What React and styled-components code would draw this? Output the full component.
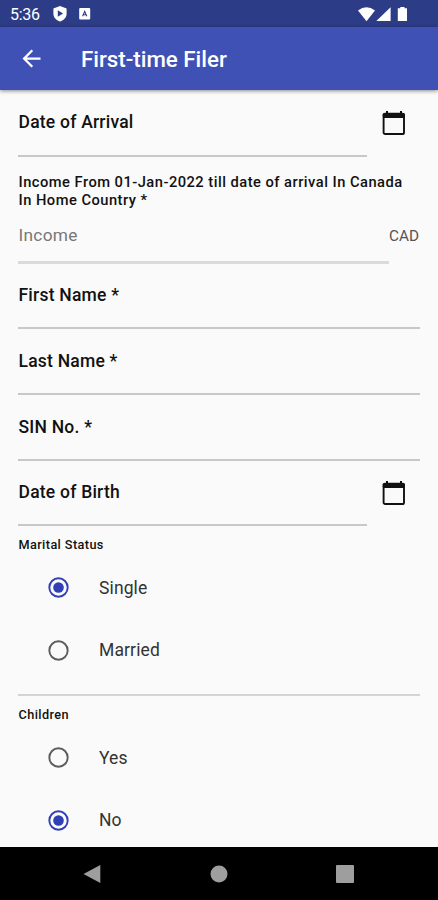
import React, { useState } from 'react';
import styled, { createGlobalStyle } from 'styled-components';

const GlobalStyle = createGlobalStyle`
  * {
    box-sizing: border-box;
  }
  body {
    margin: 0;
    font-family: Roboto, "Liberation Sans", sans-serif;
    background-color: #fafafa;
  }
`;

const Screen = styled.div`
  display: flex;
  flex-direction: column;
  height: 900px;
  overflow: hidden;
`;

const StatusBar = styled.div`
  display: flex;
  flex: none;
  align-items: center;
  height: 27px;
  padding: 1px 29px 0 10px;
  color: white;
  background-color: #2d3c87;
`;
const Clock = styled.span`
  width: 43px;
  font-size: 16px;
  letter-spacing: -0.3px;
`;
const StatusIcons = styled.div`
  display: flex;
  align-items: center;
  margin-left: ${props => (props.$end ? 'auto' : '0')};
`;

const AppBar = styled.header`
  display: flex;
  flex: none;
  align-items: center;
  height: 63px;
  padding: 0 18px;
  color: white;
  background-color: #3f51b5;
  box-shadow: 0 1px 4px rgba(0, 0, 0, 0.45);
  z-index: 1;
`;
const BackButton = styled.button`
  display: flex;
  width: 63px;
  border: 0;
  padding: 0;
  color: white;
  background: none;
  cursor: pointer;
`;
const Title = styled.h1`
  margin: 0;
  font-size: 22.3px;
  font-weight: 500;
`;

const Form = styled.form`
  flex: 1;
  min-height: 0;
  padding: 0 18px;
  overflow: hidden;
`;
const FieldRow = styled.div`
  display: flex;
  height: ${props => props.$height};
`;
const Field = styled.div`
  display: flex;
  flex: 1;
  align-items: center;
  border-bottom: ${props => props.$line || '2px solid #c8c8c8'};
  padding-bottom: ${props => props.$lift || '2px'};
  padding-left: 0.5px;
  color: ${props => (props.$hint ? '#777' : '#111')};
  font-size: ${props => (props.$hint ? '17.3px' : '17.5px')};
  font-weight: ${props => (props.$hint ? 400 : 500)};
  letter-spacing: ${props => (props.$hint ? '0.3px' : '0.22px')};
`;
const IconSlot = styled.div`
  display: flex;
  flex: none;
  align-items: center;
  justify-content: center;
  width: 53px;
  padding-bottom: 2px;
`;
const Suffix = styled.div`
  display: flex;
  flex: none;
  align-items: center;
  width: 31px;
  padding-bottom: 1px;
  color: #555;
  font-size: 15.3px;
`;
const IncomeLabel = styled.div`
  padding-top: 17px;
  padding-left: 0.5px;
  height: 52px;
  color: #111;
  font-size: 14.7px;
  font-weight: 500;
  line-height: 17.7px;
  letter-spacing: 0.48px;
  white-space: nowrap;
`;

const Group = styled.div`
  height: ${props => props.$height};
  border-bottom: 2px solid #d4d4d4;
`;
const GroupLabel = styled.div`
  height: 30.6px;
  padding-top: 11px;
  padding-left: 0.5px;
  color: #111;
  font-size: 12.7px;
  font-weight: 500;
  line-height: 15px;
  letter-spacing: 0.4px;
`;
const Option = styled.div`
  display: flex;
  align-items: center;
  height: 62.4px;
  padding-left: 30px;
  color: #333;
  font-size: 17.5px;
  letter-spacing: 0.12px;
  cursor: pointer;
`;
const OptionText = styled.span`
  margin-left: 30px;
`;

const NavBar = styled.nav`
  display: flex;
  flex: none;
  align-items: center;
  justify-content: space-between;
  height: 53px;
  padding: 0 84px 0 83px;
  background-color: #000;
`;

function CalendarIcon() {
  return (
    <svg width="24" height="26" viewBox="0 0 24 26">
      <path d="M5 1v4M19 1v4" stroke="#111" strokeWidth="2" />
      <rect x="1.6" y="3.6" width="20.4" height="20.4" rx="1.6" fill="none" stroke="#111" strokeWidth="1.9" />
      <rect x="0.8" y="3.2" width="22" height="4.8" rx="1" fill="#111" />
    </svg>
  );
}

function RadioIcon({ checked }) {
  const color = checked ? '#303fb5' : '#5c5c5c';
  return (
    <svg width="21" height="21" viewBox="0 0 21 21">
      <circle cx="10.5" cy="10.5" r="9.2" fill="none" stroke={color} strokeWidth="1.9" />
      {checked && <circle cx="10.5" cy="10.5" r="5.3" fill={color} />}
    </svg>
  );
}

function TextField({ label, height, lift }) {
  return (
    <FieldRow $height={height}>
      <Field $lift={lift}>{label}</Field>
    </FieldRow>
  );
}

function DateField({ label, height }) {
  return (
    <FieldRow $height={height}>
      <Field>{label}</Field>
      <IconSlot><CalendarIcon /></IconSlot>
    </FieldRow>
  );
}

function RadioGroup({ label, options, initial, height }) {
  const [selected, setSelected] = useState(initial);

  return (
    <Group $height={height}>
      <GroupLabel>{label}</GroupLabel>
      {options.map(option => (
        <Option key={option} onClick={() => setSelected(option)}>
          <RadioIcon checked={option === selected} />
          <OptionText>{option}</OptionText>
        </Option>
      ))}
    </Group>
  );
}

export default function App() {
  return (
    <Screen>
      <GlobalStyle />
      <StatusBar>
        <Clock>5:36</Clock>
        <StatusIcons>
          <svg width="38" height="18" viewBox="0 0 38 18">
            <path d="M7 1l6.6 2.5v5c0 4-2.7 6.7-6.6 8-3.9-1.3-6.6-4-6.6-8v-5z" fill="#fff" />
            <path d="M4.8 5.2l5.3 3.3-5.3 3.3z" fill="#2d3c87" />
            <rect x="26.2" y="3" width="11" height="11.5" rx="1" fill="#fff" />
            <path d="M29.6 11.3l2.1-5 2.1 5M30.4 9.7h2.6" fill="none" stroke="#2d3c87" strokeWidth="1.1" />
          </svg>
        </StatusIcons>
        <StatusIcons $end>
          <svg width="51" height="17" viewBox="0 0 51 17">
            <path d="M0 4.5Q8.5-2 17 4.5L8.5 15.2z" fill="#fff" />
            <path d="M32.6 1.2v13.9H18.3z" fill="#fff" />
            <path d="M39.8 2.3h2.5V0.9h4.2v1.4h2.5v12.8h-9.2z" fill="#fff" />
          </svg>
        </StatusIcons>
      </StatusBar>

      <AppBar>
        <BackButton aria-label="Back">
          <svg width="27" height="27" viewBox="0 0 24 24">
            <path d="M20 11H7.83l5.59-5.59L12 4l-8 8 8 8 1.41-1.41L7.83 13H20v-2z" fill="currentColor" />
          </svg>
        </BackButton>
        <Title>First-time Filer</Title>
      </AppBar>

      <Form>
        <DateField label="Date of Arrival" height="67px" />
        <IncomeLabel>
          Income From 01-Jan-2022 till date of arrival In Canada
          <br />
          In Home Country *
        </IncomeLabel>
        <FieldRow $height="55px">
          <Field $hint $lift="0" $line="3px solid #dadada">Income</Field>
          <Suffix>CAD</Suffix>
        </FieldRow>
        <TextField label="First Name *" height="65px" />
        <TextField label="Last Name *" height="66px" lift="0.5px" />
        <TextField label="SIN No. *" height="66px" lift="0.5px" />
        <DateField label="Date of Birth" height="65px" />
        <RadioGroup label="Marital Status" options={['Single', 'Married']} initial="Single" height="170px" />
        <RadioGroup label="Children" options={['Yes', 'No']} initial="No" height="170px" />
      </Form>

      <NavBar>
        <svg width="18" height="20" viewBox="0 0 18 20">
          <path d="M17.3 1v18L0.5 10z" fill="#9e9e9e" />
        </svg>
        <svg width="18" height="18" viewBox="0 0 18 18">
          <circle cx="9" cy="9" r="8.5" fill="#9e9e9e" />
        </svg>
        <svg width="18" height="18" viewBox="0 0 18 18">
          <rect width="18" height="18" rx="1" fill="#9e9e9e" />
        </svg>
      </NavBar>
    </Screen>
  );
}
